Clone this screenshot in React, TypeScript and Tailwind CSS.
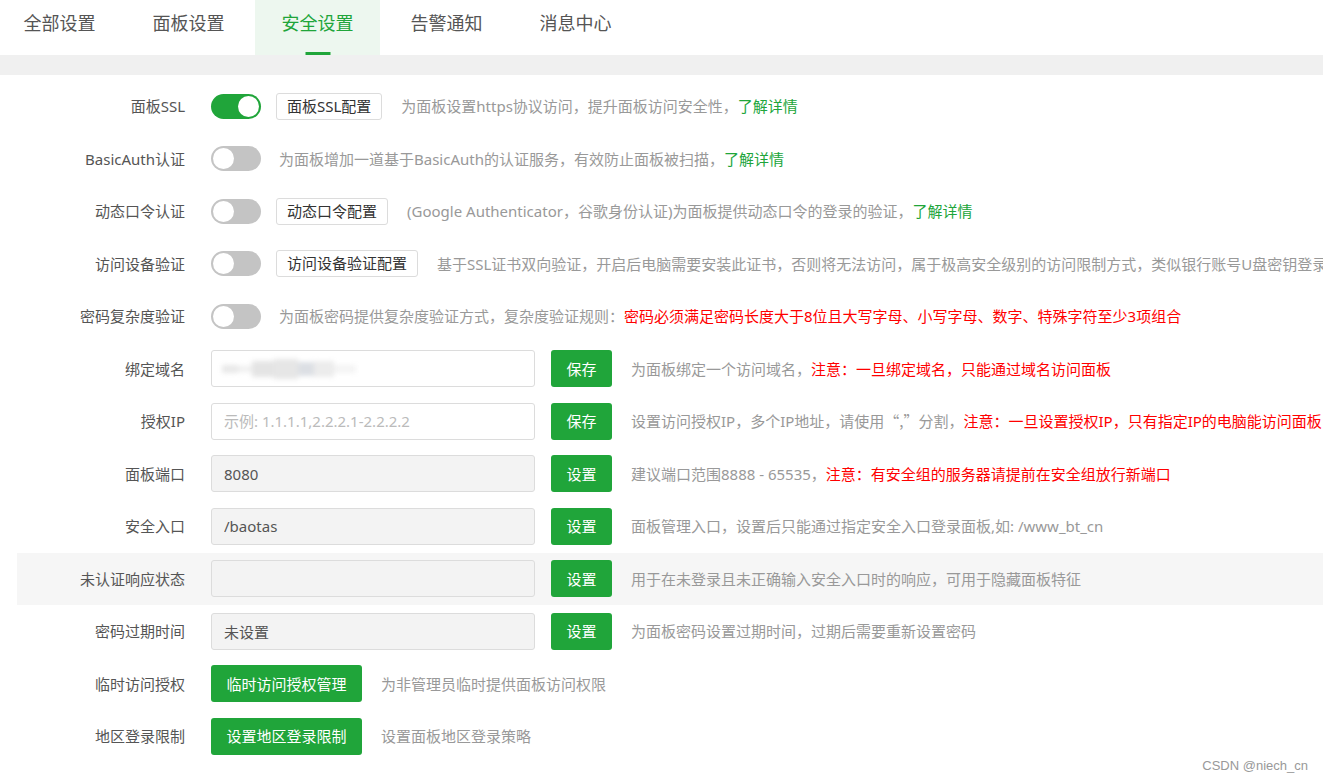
import React from "react";

const TABS = ["全部设置", "面板设置", "安全设置", "告警通知", "消息中心"];

function Toggle({ on }: { on?: boolean }) {
  return (
    <div
      className={`relative h-[25px] w-[50px] shrink-0 rounded-full ${on ? "bg-[#20a53a]" : "bg-[#c4c4c4]"}`}
    >
      <div
        className={`absolute top-[2px] h-[21px] w-[21px] rounded-full bg-white ${on ? "left-[27px]" : "left-[2px]"}`}
      />
    </div>
  );
}

function OutlineBtn({ children }: { children: React.ReactNode }) {
  return (
    <button className="ml-[15px] h-[27px] shrink-0 rounded-[3px] border border-[#dcdcdc] bg-white px-[10px] text-[15px] leading-[25px] text-[#333]">
      {children}
    </button>
  );
}

function GreenBtn({ children, wide }: { children: React.ReactNode; wide?: boolean }) {
  return (
    <button
      className={`h-[37px] shrink-0 rounded-[3px] bg-[#20a53a] text-[15px] text-white ${wide ? "w-[151px]" : "ml-[16px] w-[61px]"}`}
    >
      {children}
    </button>
  );
}

function Desc({ children, ml = "ml-[19px]" }: { children: React.ReactNode; ml?: string }) {
  return <span className={`${ml} whitespace-nowrap text-[15px] text-[#999]`}>{children}</span>;
}

const Red = ({ children }: { children: React.ReactNode }) => (
  <span className="text-[#ff0000]">{children}</span>
);
const More = () => <span className="text-[#20a53a]">了解详情</span>;

function Row({
  label,
  shade,
  children,
}: {
  label: string;
  shade?: boolean;
  children: React.ReactNode;
}) {
  return (
    <div className={`flex h-[52.5px] items-center ${shade ? "bg-[#f6f6f6]" : ""}`}>
      <div className="w-[168px] shrink-0 text-right text-[15px] text-[#555]">{label}</div>
      <div className="ml-[26px] flex items-center">{children}</div>
    </div>
  );
}

function Field({ value, placeholder, gray }: { value?: string; placeholder?: string; gray?: boolean }) {
  return (
    <input
      readOnly
      value={value ?? ""}
      placeholder={placeholder}
      className={`h-[37px] w-[324px] shrink-0 rounded-[3px] border border-[#dcdcdc] px-[12px] text-[15px] text-[#555] outline-none placeholder:text-[#bbb] ${gray ? "bg-[#f3f3f3]" : "bg-white"}`}
    />
  );
}

function BlurredField() {
  return (
    <div className="flex h-[37px] w-[324px] shrink-0 items-center rounded-[3px] border border-[#dcdcdc] bg-white pl-[10px]">
      <div className="flex items-center blur-[2.5px]">
        <div className="h-[8px] w-[16px] bg-[#e8e8e8]" />
        <div className="h-[6px] w-[14px] bg-[#efefef]" />
        <div className="h-[16px] w-[22px] bg-[#e4e4e4]" />
        <div className="h-[20px] w-[24px] bg-[#e6e6e6]" />
        <div className="h-[14px] w-[16px] bg-[#dcdfe4]" />
        <div className="h-[16px] w-[20px] bg-[#ececec]" />
        <div className="h-[8px] w-[22px] bg-[#f4f4f4]" />
      </div>
    </div>
  );
}

export default function App() {
  return (
    <div
      className="relative h-[783px] w-full overflow-hidden bg-white"
      style={{ fontFamily: '"Noto Sans", "Noto Sans CJK SC", sans-serif' }}
    >
      {/* Tabs */}
      <div className="ml-[-3px] flex h-[55px] gap-[4px]">
        {TABS.map((t) => {
          const active = t === "安全设置";
          return (
            <div
              key={t}
              className={`relative flex w-[125px] items-center justify-center pb-[8px] text-[18px] ${active ? "bg-[#edf7ef] text-[#20a53a]" : "text-[#555]"}`}
            >
              {t}
              {active && (
                <div className="absolute bottom-0 left-1/2 h-[3px] w-[25px] -translate-x-1/2 bg-[#20a53a]" />
              )}
            </div>
          );
        })}
      </div>
      <div className="h-[20px] bg-[#f0f0f0]" />

      {/* Settings */}
      <div className="pl-[17px] pt-[5px]">
        <Row label="面板SSL">
          <Toggle on />
          <OutlineBtn>面板SSL配置</OutlineBtn>
          <Desc>
            为面板设置https协议访问，提升面板访问安全性，<More />
          </Desc>
        </Row>
        <Row label="BasicAuth认证">
          <Toggle />
          <Desc ml="ml-[18px]">
            为面板增加一道基于BasicAuth的认证服务，有效防止面板被扫描，<More />
          </Desc>
        </Row>
        <Row label="动态口令认证">
          <Toggle />
          <OutlineBtn>动态口令配置</OutlineBtn>
          <Desc>
            (Google Authenticator，谷歌身份认证)为面板提供动态口令的登录的验证，<More />
          </Desc>
        </Row>
        <Row label="访问设备验证">
          <Toggle />
          <OutlineBtn>访问设备验证配置</OutlineBtn>
          <Desc>
            基于SSL证书双向验证，开启后电脑需要安装此证书，否则将无法访问，属于极高安全级别的访问限制方式，类似银行账号U盘密钥登录
          </Desc>
        </Row>
        <Row label="密码复杂度验证">
          <Toggle />
          <Desc ml="ml-[18px]">
            为面板密码提供复杂度验证方式，复杂度验证规则：
            <Red>密码必须满足密码长度大于8位且大写字母、小写字母、数字、特殊字符至少3项组合</Red>
          </Desc>
        </Row>
        <Row label="绑定域名">
          <BlurredField />
          <GreenBtn>保存</GreenBtn>
          <Desc>
            为面板绑定一个访问域名，<Red>注意：一旦绑定域名，只能通过域名访问面板</Red>
          </Desc>
        </Row>
        <Row label="授权IP">
          <Field placeholder="示例: 1.1.1.1,2.2.2.1-2.2.2.2" />
          <GreenBtn>保存</GreenBtn>
          <Desc>
            设置访问授权IP，多个IP地址，请使用
            <span style={{ fontFamily: '"Noto Sans CJK SC", sans-serif' }}>“,”</span>
            分割，
            <Red>注意：一旦设置授权IP，只有指定IP的电脑能访问面板</Red>
          </Desc>
        </Row>
        <Row label="面板端口">
          <Field value="8080" gray />
          <GreenBtn>设置</GreenBtn>
          <Desc>
            建议端口范围8888 - 65535，<Red>注意：有安全组的服务器请提前在安全组放行新端口</Red>
          </Desc>
        </Row>
        <Row label="安全入口">
          <Field value="/baotas" gray />
          <GreenBtn>设置</GreenBtn>
          <Desc>面板管理入口，设置后只能通过指定安全入口登录面板,如: /www_bt_cn</Desc>
        </Row>
        <Row label="未认证响应状态" shade>
          <Field gray />
          <GreenBtn>设置</GreenBtn>
          <Desc>用于在未登录且未正确输入安全入口时的响应，可用于隐藏面板特征</Desc>
        </Row>
        <Row label="密码过期时间">
          <Field value="未设置" gray />
          <GreenBtn>设置</GreenBtn>
          <Desc>为面板密码设置过期时间，过期后需要重新设置密码</Desc>
        </Row>
        <Row label="临时访问授权">
          <GreenBtn wide>临时访问授权管理</GreenBtn>
          <Desc>为非管理员临时提供面板访问权限</Desc>
        </Row>
        <Row label="地区登录限制">
          <GreenBtn wide>设置地区登录限制</GreenBtn>
          <Desc>设置面板地区登录策略</Desc>
        </Row>
      </div>

      <div
        className="absolute bottom-[8px] right-[15px] text-[13px] text-[#999]"
        style={{ fontFamily: '"Liberation Sans", "Noto Sans CJK SC", sans-serif' }}
      >
        CSDN @niech_cn
      </div>
    </div>
  );
}
